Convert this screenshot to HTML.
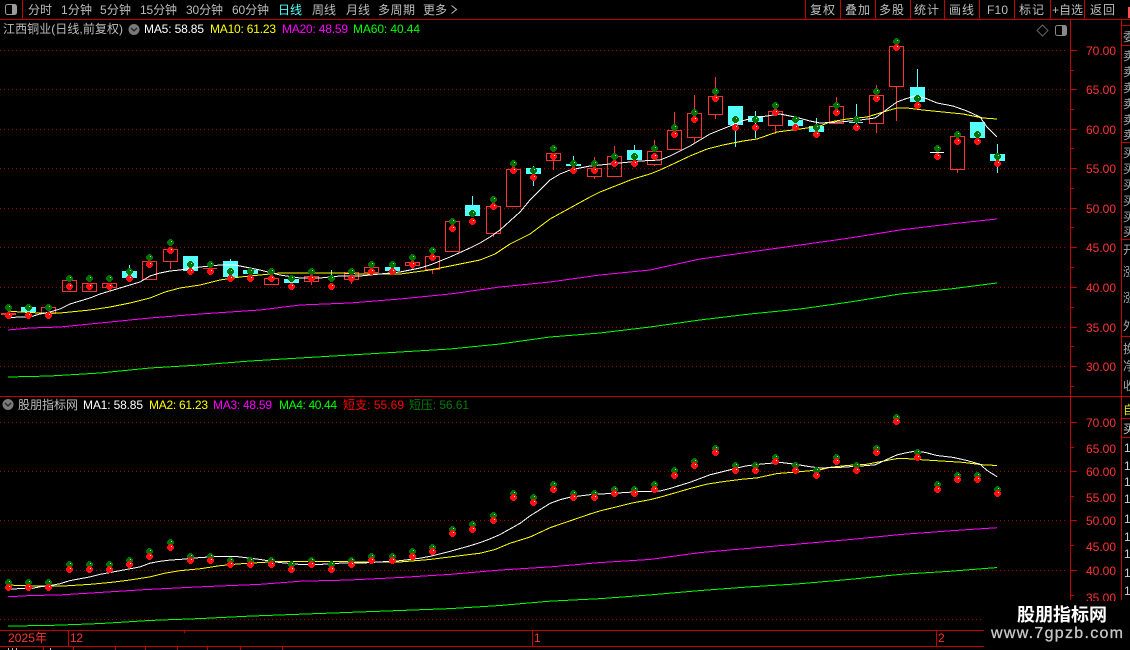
<!DOCTYPE html>
<html>
<head>
<meta charset="utf-8">
<style>
html,body{margin:0;padding:0;background:#000;width:1130px;height:650px;overflow:hidden}
svg{display:block;position:absolute;left:0;top:0}
text{font-family:"Liberation Sans","WenQuanYi Zen Hei","Noto Sans CJK SC",sans-serif;font-size:12px;white-space:pre}
.n{fill:#bdbdbd}
.a{fill:#ff3232}
.grid{stroke:#960000;stroke-width:1;stroke-dasharray:1 3;fill:none}
.line{stroke:#c40000;stroke-width:1;fill:none}
.ma{fill:none;stroke-width:1;shape-rendering:crispEdges;vector-effect:non-scaling-stroke}
.ma use,.ma polyline{vector-effect:non-scaling-stroke}
</style>
</head>
<body>
<svg width="1130" height="650" viewBox="0 0 1130 650" xmlns="http://www.w3.org/2000/svg">
<defs>
<g id="g"><path d="M-1-3h3v1h1v1h1v3h-1v1h-1v1h-3v-1h-1v-1h-1v-3h1v-1h1z" fill="#007000"/><rect x="1" y="-1" width="1" height="1" fill="#b0e0b0"/></g>
<g id="r"><path d="M-1-3h3v1h1v1h1v3h-1v1h-1v1h-3v-1h-1v-1h-1v-3h1v-1h1z" fill="#ff1010"/><rect x="1" y="-1" width="1" height="1" fill="#fff"/></g>
<g id="lines">
<polyline class="ma" stroke="#00ff00" points="8,377 50,376 100,373 150,368 200,365 250,361 300,358 350,355 400,352 450,349 500,344 550,337 600,333 650,327 700,320 750,314 800,309 850,302 900,294 950,289 997,283"/>
<polyline class="ma" stroke="#ff00ff" points="8,330 30,328 60,327 100,323 150,318 200,314 260,310 300,305 350,303 400,299 450,294 500,287 550,282 600,275 650,270 700,259 750,252 800,245 850,238 900,230 950,224 997,219"/>
<polyline class="ma" stroke="#ffff00" points="8,311 20,312 40,313 50,313 60,313 70,312 90,310 110,307 130,303 150,298 165,292 180,288 200,285 220,280 240,277 260,275 280,273 300,273 340,273 360,274 380,274 400,274 430,270 450,266 480,260 495,254 510,244 530,234 550,219 570,208 590,197 600,192 633,179 650,174 660,170 673,164 690,156 707,149 723,145 743,141 757,139 777,132 800,129 820,126 830,122 847,119 867,117 880,113 890,110 897,108 907,108 923,110 943,112 963,114 983,118 997,119"/>
<polyline class="ma" stroke="#ffffff" points="8,318 18,317 30,317 40,314 50,312 60,309 70,304 80,301 90,298 100,294 110,291 120,288 130,285 140,282 150,276 160,273 170,271 180,270 200,267 220,265 235,265 245,267 260,270 280,275 300,278 320,278 340,276 360,276 380,274 400,272 420,268 430,265 450,257 470,248 480,243 490,237 500,230 510,221 520,212 530,200 540,190 550,180 560,174 570,170 590,166 600,165 620,163 640,161 660,160 670,156 680,151 690,146 700,140 710,134 720,130 730,126 745,120 760,117 780,114 795,117 810,121 820,123 840,122 860,120 875,118 882,113 890,107 897,102 905,99 915,96 925,98 937,103 953,106 967,111 980,117 987,127 997,137"/>
</g>
</defs>

<!-- top toolbar -->
<path class="line" d="M0 19.5H1130M22.5 0V19M805.5 0V19M840.5 0V19M875.5 0V19M910.5 0V19M944.5 0V19M979.5 0V19M1014.5 0V19M1050.5 0V19M1084.5 0V19"/>
<rect x="5.500" y="4.500" width="11" height="10" rx="2" fill="none" stroke="#9a9a9a"/><rect x="12" y="5" width="4" height="9" fill="#9a9a9a"/>
<text class="n" x="28" y="14" textLength="24">分时</text>
<text class="n" x="61" y="14" textLength="31">1分钟</text>
<text class="n" x="100" y="14" textLength="31">5分钟</text>
<text class="n" x="140" y="14" textLength="37">15分钟</text>
<text class="n" x="186" y="14" textLength="37">30分钟</text>
<text class="n" x="232" y="14" textLength="37">60分钟</text>
<text x="278" y="14" fill="#54ffff" textLength="24">日线</text>
<text class="n" x="312" y="14" textLength="24">周线</text>
<text class="n" x="346" y="14" textLength="24">月线</text>
<text class="n" x="378" y="14" textLength="37">多周期</text>
<text class="n" x="423" y="14" textLength="24">更多</text>
<path d="M451.500 5.500L456.500 9.500L451.500 13.500" fill="none" stroke="#bdbdbd"/>
<text class="n" x="810" y="14" textLength="25">复权</text>
<text class="n" x="845" y="14" textLength="25">叠加</text>
<text class="n" x="879" y="14" textLength="25">多股</text>
<text class="n" x="914" y="14" textLength="25">统计</text>
<text class="n" x="949" y="14" textLength="25">画线</text>
<text class="n" x="987" y="14" textLength="21">F10</text>
<text class="n" x="1019" y="14" textLength="25">标记</text>
<text class="n" x="1052" y="14" textLength="31">+自选</text>
<text class="n" x="1090" y="14" textLength="25">返回</text>
<rect x="1128" y="7" width="2" height="11" fill="#ff5050"/>

<!-- upper header -->
<text class="n" x="3" y="33" textLength="120">江西铜业(日线,前复权)</text>
<circle cx="134" cy="29.500" r="5.500" fill="#7a7a7a"/><path d="M131 28l3 3 3-3" fill="none" stroke="#222" stroke-width="1.300"/>
<text x="144" y="33" fill="#fff" textLength="60">MA5: 58.85</text>
<text x="210" y="33" fill="#ff0" textLength="66">MA10: 61.23</text>
<text x="282" y="33" fill="#f0f" textLength="66">MA20: 48.59</text>
<text x="353" y="33" fill="#0f0" textLength="67">MA60: 40.44</text>
<path d="M1042.500 25L1048 30.500L1042.500 36L1037 30.500Z" fill="none" stroke="#666"/>
<rect x="1055.500" y="25.500" width="11" height="10" rx="2" fill="none" stroke="#8a8a8a"/><rect x="1062" y="26" width="4" height="9" fill="#8a8a8a"/>

<!-- grid upper -->
<path class="grid" d="M0 50.500H1066M0 89.500H1066M0 129.500H1066M0 168.500H1066M0 208.500H1066M0 247.500H1066M0 287.500H1066M0 327.500H1066M0 366.500H1066"/>
<!-- grid lower -->
<path class="grid" d="M0 422.500H1066M0 471.500H1066M0 520.500H1066M0 570.500H1066M0 619.500H1066"/>

<!-- frame -->
<path class="line" d="M0 396.500H1121M1070.500 19V600M1121.500 19V600M1121 25.500H1130M1121 45.500H1130M1121 142.500H1130M1121 239.500H1130M1121 336.500H1130M1121 396.500H1130M1121 418.500H1130M1121 437.500H1130"/>
<path class="line" d="M1071 50.500H1077M1071 70.500H1074M1071 89.500H1077M1071 109.500H1074M1071 129.500H1077M1071 148.500H1074M1071 168.500H1077M1071 188.500H1074M1071 208.500H1077M1071 227.500H1074M1071 247.500H1077M1071 267.500H1074M1071 287.500H1077M1071 307.500H1074M1071 327.500H1077M1071 346.500H1074M1071 366.500H1077M1071 386.500H1074"/>
<path class="line" d="M1071 422.500H1077M1071 447.500H1074M1071 471.500H1077M1071 496.500H1074M1071 520.500H1077M1071 545.500H1074M1071 570.500H1077M1071 595.500H1074"/>

<!-- axis labels -->
<text class="a" x="1086" y="55">70.00</text>
<text class="a" x="1086" y="94">65.00</text>
<text class="a" x="1086" y="134">60.00</text>
<text class="a" x="1086" y="173">55.00</text>
<text class="a" x="1086" y="213">50.00</text>
<text class="a" x="1086" y="252">45.00</text>
<text class="a" x="1086" y="292">40.00</text>
<text class="a" x="1086" y="332">35.00</text>
<text class="a" x="1086" y="371">30.00</text>
<text class="a" x="1086" y="427">70.00</text>
<text class="a" x="1086" y="453">65.00</text>
<text class="a" x="1086" y="476">60.00</text>
<text class="a" x="1086" y="502">55.00</text>
<text class="a" x="1086" y="525">50.00</text>
<text class="a" x="1086" y="551">45.00</text>
<text class="a" x="1086" y="575">40.00</text>
<text class="a" x="1086" y="602">35.00</text>

<!-- right column -->
<g>
<text x="1123" y="41" fill="#a8a8a8">委</text>
<text x="1123" y="60" fill="#a8a8a8">卖</text><text x="1123" y="76" fill="#a8a8a8">卖</text><text x="1123" y="92" fill="#a8a8a8">卖</text><text x="1123" y="108" fill="#a8a8a8">卖</text><text x="1123" y="124" fill="#a8a8a8">卖</text><text x="1123" y="139" fill="#a8a8a8">卖</text>
<text x="1123" y="157" fill="#a8a8a8">买</text><text x="1123" y="173" fill="#a8a8a8">买</text><text x="1123" y="189" fill="#a8a8a8">买</text><text x="1123" y="205" fill="#a8a8a8">买</text><text x="1123" y="221" fill="#a8a8a8">买</text><text x="1123" y="236" fill="#a8a8a8">买</text>
<text x="1123" y="254" fill="#a8a8a8">开</text><text x="1123" y="276" fill="#a8a8a8">涨</text><text x="1123" y="302" fill="#a8a8a8">涨</text><text x="1123" y="330" fill="#a8a8a8">外</text>
<text x="1123" y="353" fill="#a8a8a8">换</text><text x="1123" y="370" fill="#a8a8a8">净</text><text x="1123" y="390" fill="#a8a8a8">收</text>
<text x="1123" y="414" fill="#e0e000">自</text>
<text x="1123" y="433" fill="#d0d0d0">买</text>
<text x="1124" y="452" fill="#d0d0d0">1</text><text x="1124" y="470" fill="#d0d0d0">1</text><text x="1124" y="486" fill="#d0d0d0">1</text><text x="1124" y="503" fill="#d0d0d0">1</text><text x="1124" y="523" fill="#d0d0d0">1</text><text x="1124" y="541" fill="#d0d0d0">1</text><text x="1124" y="558" fill="#d0d0d0">1</text><text x="1124" y="577" fill="#d0d0d0">1</text><text x="1124" y="595" fill="#d0d0d0">1</text>
</g>

<!-- candles: hollow red -->
<path fill="none" stroke="#ff3232" shape-rendering="crispEdges" d="
M41.500 307.500h14v6h-14z
M62.500 280.500h14v11h-14z
M82.500 283.500h14v8h-14z
M102.500 283.500h14v4h-14z
M142.500 261.500h14v18h-14z
M163.500 249.500h14v12h-14zM170.500 262V269
M210.500 264V272M203 268.500h14
M264.500 278.500h14v6h-14z
M304.500 276.500h14v5h-14zM311.500 282V285
M344.500 272.500h14v7h-14zM351.500 280V284
M364.500 267.500h14v5h-14z
M405.500 262.500h14v3h-14zM412.500 266V269
M425.500 256.500h14v13h-14zM432.500 270V274
M445.500 221.500h14v30h-14z
M486.500 206.500h14v27h-14zM493.500 234V237
M506.500 169.500h14v37h-14z
M546.500 153.500h14v7h-14zM553.500 161V170
M587.500 168.500h14v8h-14zM594.500 157V168M594.500 177V179
M607.500 156.500h14v20h-14zM614.500 146V156
M647.500 151.500h14v13h-14zM654.500 140V151M654.500 165V166
M667.500 130.500h14v19h-14zM674.500 112V130
M687.500 113.500h14v24h-14zM694.500 95V113M694.500 138V143
M708.500 96.500h14v18h-14zM715.500 77V96M715.500 115V119
M768.500 111.500h14v14h-14zM775.500 126V134
M829.500 106.500h14v17h-14zM836.500 97V106
M869.500 95.500h14v28h-14zM876.500 85V95M876.500 124V133
M889.500 46.500h14v40h-14zM896.500 87V121
M950.500 136.500h14v33h-14zM957.500 170V173
"/>
<rect x="1" y="313" width="15" height="2" fill="#ff3232"/>
<!-- cyan candles -->
<g fill="#54ffff" shape-rendering="crispEdges">
<rect x="21" y="307" width="15" height="5"/>
<rect x="122" y="271" width="15" height="7"/><rect x="129" y="265" width="1" height="6"/>
<rect x="183" y="256" width="15" height="15"/>
<rect x="223" y="261" width="15" height="16"/><rect x="230" y="259" width="1" height="2"/>
<rect x="243" y="270" width="15" height="4"/>
<rect x="284" y="279" width="15" height="4"/><rect x="291" y="276" width="1" height="3"/>
<rect x="331" y="270" width="1" height="12"/>
<rect x="385" y="267" width="15" height="4"/>
<rect x="465" y="205" width="15" height="11"/><rect x="472" y="196" width="1" height="9"/>
<rect x="526" y="168" width="15" height="6"/><rect x="533" y="166" width="1" height="20"/>
<rect x="566" y="164" width="15" height="2"/><rect x="573" y="156" width="1" height="14"/>
<rect x="627" y="150" width="15" height="10"/><rect x="634" y="145" width="1" height="5"/>
<rect x="728" y="106" width="15" height="19"/><rect x="735" y="125" width="1" height="22"/>
<rect x="748" y="116" width="15" height="6"/><rect x="755" y="111" width="1" height="27"/>
<rect x="788" y="120" width="15" height="6"/>
<rect x="809" y="126" width="15" height="6"/><rect x="816" y="118" width="1" height="8"/>
<rect x="849" y="122" width="14" height="1"/><rect x="856" y="104" width="1" height="23"/>
<rect x="910" y="87" width="15" height="15"/><rect x="917" y="69" width="1" height="18"/>
<rect x="970" y="122" width="15" height="16"/>
<rect x="990" y="154" width="15" height="7"/><rect x="997" y="144" width="1" height="29"/>
</g>
<rect x="930" y="152" width="14" height="1" fill="#fff"/>

<!-- MA lines upper and lower -->
<use href="#lines"/>
<use href="#lines" transform="translate(0 391.400) scale(1 0.6224)"/>

<!-- upper markers -->
<g>
<use href="#g" x="8" y="307"/><use href="#r" x="8" y="315"/>
<use href="#g" x="28" y="307"/><use href="#r" x="28" y="315"/>
<use href="#g" x="48" y="307"/><use href="#r" x="48" y="315"/>
<use href="#g" x="69" y="278"/><use href="#r" x="69" y="286"/>
<use href="#g" x="89" y="278"/><use href="#r" x="89" y="286"/>
<use href="#g" x="109" y="278"/><use href="#r" x="109" y="286"/>
<use href="#g" x="129" y="271"/><use href="#r" x="129" y="278"/>
<use href="#g" x="149" y="257"/><use href="#r" x="149" y="264"/>
<use href="#g" x="170" y="242"/><use href="#r" x="170" y="250"/>
<use href="#g" x="190" y="264"/><use href="#r" x="190" y="271"/>
<use href="#g" x="210" y="264"/><use href="#r" x="210" y="271"/>
<use href="#g" x="230" y="271"/><use href="#r" x="230" y="278"/>
<use href="#g" x="250" y="271"/><use href="#r" x="250" y="278"/>
<use href="#g" x="271" y="271"/><use href="#r" x="271" y="278"/>
<use href="#g" x="291" y="278"/><use href="#r" x="291" y="286"/>
<use href="#g" x="311" y="271"/><use href="#r" x="311" y="278"/>
<use href="#g" x="331" y="278"/><use href="#r" x="331" y="286"/>
<use href="#g" x="351" y="271"/><use href="#r" x="351" y="278"/>
<use href="#g" x="371" y="264"/><use href="#r" x="371" y="271"/>
<use href="#g" x="392" y="264"/><use href="#r" x="392" y="271"/>
<use href="#g" x="412" y="257"/><use href="#r" x="412" y="264"/>
<use href="#g" x="432" y="250"/><use href="#r" x="432" y="257"/>
<use href="#g" x="452" y="221"/><use href="#r" x="452" y="228"/>
<use href="#g" x="472" y="213"/><use href="#r" x="472" y="221"/>
<use href="#g" x="493" y="199"/><use href="#r" x="493" y="206"/>
<use href="#g" x="513" y="163"/><use href="#r" x="513" y="170"/>
<use href="#g" x="533" y="170"/><use href="#r" x="533" y="177"/>
<use href="#g" x="553" y="148"/><use href="#r" x="553" y="156"/>
<use href="#g" x="573" y="163"/><use href="#r" x="573" y="170"/>
<use href="#g" x="594" y="163"/><use href="#r" x="594" y="170"/>
<use href="#g" x="614" y="156"/><use href="#r" x="614" y="163"/>
<use href="#g" x="634" y="156"/><use href="#r" x="634" y="163"/>
<use href="#g" x="654" y="148"/><use href="#r" x="654" y="156"/>
<use href="#g" x="674" y="127"/><use href="#r" x="674" y="134"/>
<use href="#g" x="694" y="112"/><use href="#r" x="694" y="119"/>
<use href="#g" x="715" y="91"/><use href="#r" x="715" y="98"/>
<use href="#g" x="735" y="119"/><use href="#r" x="735" y="127"/>
<use href="#g" x="755" y="119"/><use href="#r" x="755" y="127"/>
<use href="#g" x="775" y="105"/><use href="#r" x="775" y="112"/>
<use href="#g" x="795" y="119"/><use href="#r" x="795" y="127"/>
<use href="#g" x="816" y="127"/><use href="#r" x="816" y="134"/>
<use href="#g" x="836" y="105"/><use href="#r" x="836" y="112"/>
<use href="#g" x="856" y="119"/><use href="#r" x="856" y="127"/>
<use href="#g" x="876" y="91"/><use href="#r" x="876" y="98"/>
<use href="#g" x="896" y="41"/><use href="#r" x="896" y="47"/>
<use href="#g" x="917" y="98"/><use href="#r" x="917" y="105"/>
<use href="#g" x="937" y="148"/><use href="#r" x="937" y="156"/>
<use href="#g" x="957" y="134"/><use href="#r" x="957" y="141"/>
<use href="#g" x="977" y="134"/><use href="#r" x="977" y="141"/>
<use href="#g" x="997" y="156"/><use href="#r" x="997" y="163"/>
</g>
<!-- lower markers -->
<g>
<use href="#g" x="8" y="582"/><use href="#r" x="8" y="587"/>
<use href="#g" x="28" y="582"/><use href="#r" x="28" y="587"/>
<use href="#g" x="48" y="582"/><use href="#r" x="48" y="587"/>
<use href="#g" x="69" y="564"/><use href="#r" x="69" y="569"/>
<use href="#g" x="89" y="564"/><use href="#r" x="89" y="569"/>
<use href="#g" x="109" y="564"/><use href="#r" x="109" y="569"/>
<use href="#g" x="129" y="560"/><use href="#r" x="129" y="564"/>
<use href="#g" x="149" y="551"/><use href="#r" x="149" y="556"/>
<use href="#g" x="170" y="542"/><use href="#r" x="170" y="547"/>
<use href="#g" x="190" y="556"/><use href="#r" x="190" y="560"/>
<use href="#g" x="210" y="556"/><use href="#r" x="210" y="560"/>
<use href="#g" x="230" y="560"/><use href="#r" x="230" y="564"/>
<use href="#g" x="250" y="560"/><use href="#r" x="250" y="564"/>
<use href="#g" x="271" y="560"/><use href="#r" x="271" y="564"/>
<use href="#g" x="291" y="564"/><use href="#r" x="291" y="569"/>
<use href="#g" x="311" y="560"/><use href="#r" x="311" y="564"/>
<use href="#g" x="331" y="564"/><use href="#r" x="331" y="569"/>
<use href="#g" x="351" y="560"/><use href="#r" x="351" y="564"/>
<use href="#g" x="371" y="556"/><use href="#r" x="371" y="560"/>
<use href="#g" x="392" y="556"/><use href="#r" x="392" y="560"/>
<use href="#g" x="412" y="551"/><use href="#r" x="412" y="556"/>
<use href="#g" x="432" y="547"/><use href="#r" x="432" y="551"/>
<use href="#g" x="452" y="529"/><use href="#r" x="452" y="533"/>
<use href="#g" x="472" y="524"/><use href="#r" x="472" y="529"/>
<use href="#g" x="493" y="515"/><use href="#r" x="493" y="520"/>
<use href="#g" x="513" y="493"/><use href="#r" x="513" y="497"/>
<use href="#g" x="533" y="497"/><use href="#r" x="533" y="502"/>
<use href="#g" x="553" y="484"/><use href="#r" x="553" y="489"/>
<use href="#g" x="573" y="493"/><use href="#r" x="573" y="497"/>
<use href="#g" x="594" y="493"/><use href="#r" x="594" y="497"/>
<use href="#g" x="614" y="489"/><use href="#r" x="614" y="493"/>
<use href="#g" x="634" y="489"/><use href="#r" x="634" y="493"/>
<use href="#g" x="654" y="484"/><use href="#r" x="654" y="489"/>
<use href="#g" x="674" y="470"/><use href="#r" x="674" y="475"/>
<use href="#g" x="694" y="461"/><use href="#r" x="694" y="465"/>
<use href="#g" x="715" y="448"/><use href="#r" x="715" y="452"/>
<use href="#g" x="735" y="465"/><use href="#r" x="735" y="470"/>
<use href="#g" x="755" y="465"/><use href="#r" x="755" y="470"/>
<use href="#g" x="775" y="457"/><use href="#r" x="775" y="461"/>
<use href="#g" x="795" y="465"/><use href="#r" x="795" y="470"/>
<use href="#g" x="816" y="470"/><use href="#r" x="816" y="475"/>
<use href="#g" x="836" y="457"/><use href="#r" x="836" y="461"/>
<use href="#g" x="856" y="465"/><use href="#r" x="856" y="470"/>
<use href="#g" x="876" y="448"/><use href="#r" x="876" y="452"/>
<use href="#g" x="896" y="417"/><use href="#r" x="896" y="421"/>
<use href="#g" x="917" y="452"/><use href="#r" x="917" y="457"/>
<use href="#g" x="937" y="484"/><use href="#r" x="937" y="489"/>
<use href="#g" x="957" y="475"/><use href="#r" x="957" y="479"/>
<use href="#g" x="977" y="475"/><use href="#r" x="977" y="479"/>
<use href="#g" x="997" y="489"/><use href="#r" x="997" y="493"/>
</g>

<!-- lower header -->
<circle cx="8" cy="404.500" r="5.500" fill="#7a7a7a"/><path d="M5 403l3 3 3-3" fill="none" stroke="#222" stroke-width="1.300"/>
<text class="n" x="18" y="409" textLength="60">股朋指标网</text>
<text x="83" y="409" fill="#fff" textLength="60">MA1: 58.85</text>
<text x="149" y="409" fill="#ff0" textLength="59">MA2: 61.23</text>
<text x="213" y="409" fill="#f0f" textLength="59">MA3: 48.59</text>
<text x="279" y="409" fill="#0f0" textLength="58">MA4: 40.44</text>
<text x="343" y="409" fill="#f00" textLength="61">短支: 55.69</text>
<text x="409" y="409" fill="#087a08" textLength="60">短压: 56.61</text>

<!-- date bar -->
<path class="line" d="M0 630.500H984M0 646.500H984M68.500 630V646M184.500 630V633M532.500 630V646M936.500 630V646M43.500 647V650M73.500 647V650M115.500 647V650M145.500 647V650M177.500 647V650M207.500 647V650M240.500 647V650M282.500 647V650"/>
<text class="a" x="8" y="642" textLength="39">2025年</text>
<text class="a" x="70" y="642" textLength="13">12</text>
<text class="a" x="534" y="642">1</text>
<text class="a" x="938" y="642">2</text>
<path d="M8 648h1v2H8zM12 648h1v2h-1zM16 648h1v2h-1zM50 648h1v2h-1z" fill="#bdbdbd"/>

<!-- watermark -->
<rect x="984" y="601" width="146" height="49" fill="#000"/>
<text x="1017" y="621" fill="#fff" style="font-size:18px;font-weight:bold;font-family:'Noto Sans CJK SC','WenQuanYi Zen Hei',sans-serif" textLength="90">股朋指标网</text>
<text x="991" y="638" fill="#c8c8c8" stroke="#c8c8c8" stroke-width="0.300" style="font-size:16px;font-family:'Liberation Sans',sans-serif" textLength="132">www.7gpzb.com</text>
</svg>
</body>
</html>
